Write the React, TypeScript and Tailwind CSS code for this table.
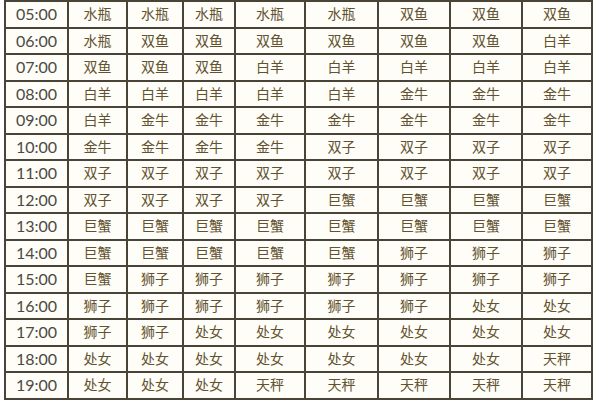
const widths = [63, 59, 56, 52, 70, 73, 72, 72, 70];

const rows: Array<[string, string[]]> = [
  ["05:00", ["水瓶", "水瓶", "水瓶", "水瓶", "水瓶", "双鱼", "双鱼", "双鱼"]],
  ["06:00", ["水瓶", "双鱼", "双鱼", "双鱼", "双鱼", "双鱼", "双鱼", "白羊"]],
  ["07:00", ["双鱼", "双鱼", "双鱼", "白羊", "白羊", "白羊", "白羊", "白羊"]],
  ["08:00", ["白羊", "白羊", "白羊", "白羊", "白羊", "金牛", "金牛", "金牛"]],
  ["09:00", ["白羊", "金牛", "金牛", "金牛", "金牛", "金牛", "金牛", "金牛"]],
  ["10:00", ["金牛", "金牛", "金牛", "金牛", "双子", "双子", "双子", "双子"]],
  ["11:00", ["双子", "双子", "双子", "双子", "双子", "双子", "双子", "双子"]],
  ["12:00", ["双子", "双子", "双子", "双子", "巨蟹", "巨蟹", "巨蟹", "巨蟹"]],
  ["13:00", ["巨蟹", "巨蟹", "巨蟹", "巨蟹", "巨蟹", "巨蟹", "巨蟹", "巨蟹"]],
  ["14:00", ["巨蟹", "巨蟹", "巨蟹", "巨蟹", "巨蟹", "狮子", "狮子", "狮子"]],
  ["15:00", ["巨蟹", "狮子", "狮子", "狮子", "狮子", "狮子", "狮子", "狮子"]],
  ["16:00", ["狮子", "狮子", "狮子", "狮子", "狮子", "狮子", "处女", "处女"]],
  ["17:00", ["狮子", "狮子", "处女", "处女", "处女", "处女", "处女", "处女"]],
  ["18:00", ["处女", "处女", "处女", "处女", "处女", "处女", "处女", "天秤"]],
  ["19:00", ["处女", "处女", "处女", "天秤", "天秤", "天秤", "天秤", "天秤"]],
];

export default function App() {
  return (
    <div className="h-[400px] w-[600px] overflow-hidden bg-white pl-[4px]">
      <table className="w-[589px] table-fixed border-collapse border-2 border-[#4a4337] bg-[#fefdf8] font-['Open_Sans','Noto_Sans_CJK_SC',sans-serif]">
        <colgroup>
          {widths.map((w, i) => (
            <col key={i} style={{ width: w }} />
          ))}
        </colgroup>
        <tbody>
          {rows.map(([time, signs]) => (
            <tr key={time} className="h-[26.5px]">
              <td className="border-2 border-[#4a4337] p-0 text-center font-['Lato',sans-serif] text-[16px] leading-none text-[#4b4a42]">
                {time}
              </td>
              {signs.map((s, i) => (
                <td
                  key={i}
                  className="border-2 border-[#4a4337] p-0 text-center text-[14px] leading-none text-[#62522f]"
                >
                  {s}
                </td>
              ))}
            </tr>
          ))}
        </tbody>
      </table>
    </div>
  );
}
